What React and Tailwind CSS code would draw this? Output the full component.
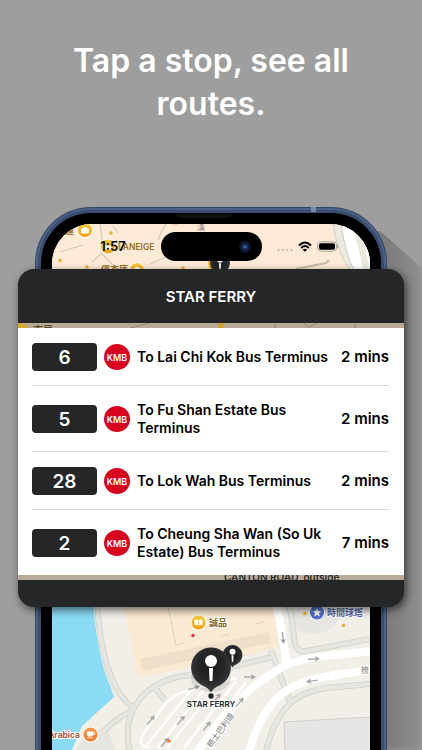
import React from "react";

const routes = [
  { number: "6", destination: "To Lai Chi Kok Bus Terminus", eta: "2 mins" },
  { number: "5", destination: "To Fu Shan Estate Bus Terminus", eta: "2 mins" },
  { number: "28", destination: "To Lok Wah Bus Terminus", eta: "2 mins" },
  { number: "2", destination: "To Cheung Sha Wan (So Uk Estate) Bus Terminus", eta: "7 mins" },
];

const arrows = [
  [151, 720, -50],
  [181, 720, -50],
  [207, 726, -50],
  [165, 742, -50],
  [217, 698, -50],
  [240, 702, -50],
  [194, 688, -16],
  [250, 677, 0],
  [314, 659, -2],
  [312, 681, 172],
  [283, 638, 84],
];

const cjk = "font-['Inter','Noto_Sans_CJK_TC',sans-serif]";

function Arrow({ x, y, angle }) {
  return (
    <g transform={`translate(${x} ${y}) rotate(${angle})`}>
      <path d="M-6 0H3" fill="none" stroke="#a9a9a9" strokeWidth="1.400" />
      <path d="M1 -2.800L6 0L1 2.800L2 0Z" fill="#a3a3a3" />
    </g>
  );
}

function Poi({ x, y, fill, children }) {
  return (
    <g transform={`translate(${x} ${y})`}>
      <circle r="8" fill="#fff" opacity=".75" />
      <circle r="7" fill={fill} />
      {children}
    </g>
  );
}

function StopPin({ x, y, scale }) {
  return (
    <g transform={`translate(${x} ${y}) scale(${scale})`}>
      <path
        d="M0 -20A20 20 0 0 1 9 17.8C5 19.5 2.500 21 0 25C-2.500 21 -5 19.500 -9 17.800A20 20 0 0 1 0 -20Z"
        fill="url(#pin)"
      />
      <circle cy="-6.500" r="6" fill="#fff" />
      <path d="M-2 .5H2L1.400 13.500H-1.400Z" fill="#fff" />
    </g>
  );
}

function Map() {
  return (
    <svg
      className={`h-full w-full ${cjk}`}
      viewBox="52 224 318 526"
      preserveAspectRatio="xMidYMin slice"
      role="img"
      aria-label="Map around the Star Ferry stop"
    >
      <defs>
        <radialGradient id="pin" cx=".5" cy=".4" r=".65">
          <stop offset="0" stopColor="#1c1d1f" />
          <stop offset=".5" stopColor="#242527" />
          <stop offset=".85" stopColor="#3a3b3d" />
          <stop offset="1" stopColor="#0c0c0c" />
        </radialGradient>
        <linearGradient id="gold" x1="0" y1="0" x2="0" y2="1">
          <stop offset="0" stopColor="#fbc93a" />
          <stop offset="1" stopColor="#eda312" />
        </linearGradient>
        <linearGradient id="orange" x1="0" y1="0" x2="0" y2="1">
          <stop offset="0" stopColor="#fa9a4a" />
          <stop offset="1" stopColor="#ee7420" />
        </linearGradient>
      </defs>
      <rect x="52" y="224" width="318" height="526" fill="#f1efe7" />

      {/* Upper district */}
      <rect x="52" y="224" width="318" height="110" fill="#fdebd7" />
      <path d="M333 224H370V272H352Q341 262 333 224Z" fill="#eceae0" />
      <path d="M341 222H352L364 272H354Q347 255 341 222Z" fill="#fff" />
      <path d="M359 222H370V272Q366 250 359 222Z" fill="#fff" />
      <path d="M333 224Q338 255 349 268L352 272M341 224Q345 254 355 272" fill="none" stroke="#cfcec4" strokeWidth="1" />
      <path d="M100 224Q103 240 102 253L92 262M113 226L118 233M116 240L121 247M102 254L117 269M150 264L166 257M166 224Q162 230 158 240M60 252L83 245M52 236L64 233" fill="none" stroke="#d5c8b7" strokeWidth="1.200" />
      <path d="M296 269L326 263L329 260" fill="none" stroke="#c8bba5" strokeWidth="2" />
      <g fill="#f5a623">
        <circle cx="111" cy="233" r="1.700" />
        <circle cx="60" cy="260.500" r="1.700" />
        <circle cx="87" cy="267" r="1.700" />
        <circle cx="183" cy="268" r="1.700" />
      </g>
      <circle cx="175" cy="222" r="4" fill="#f6c7bb" />
      <Poi x={85} y={230} fill="url(#gold)">
        <path d="M-3.500 -1H3.500V3H-3.500ZM-1.500 -1V-2.500H1.500V-1" fill="#fff" stroke="#fff" strokeWidth=".8" />
      </Poi>
      <text x="65" y="234" fontSize="9" fontWeight="600" fill="#93712c">運</text>
      <Poi x={108} y={246.5} fill="url(#gold)">
        <path d="M-3.500 -1H3.500V3H-3.500Z" fill="#fff" />
      </Poi>
      <text x="118" y="250" fontSize="8.500" fontWeight="600" fill="#93712c">LANEIGE</text>
      <text x="101" y="273" fontSize="9" fontWeight="600" fill="#93712c">優衣庫</text>
      <Poi x={137} y={270} fill="url(#gold)">
        <circle r="3" fill="#fff" />
      </Poi>
      <text x="197" y="230" fontSize="8" fill="#85817d">漢</text>
      <path d="M209 258L212 272" stroke="#f2b91f" strokeWidth="4" />
      <StopPin x={220} y={263} scale={0.5} />

      {/* Harbour and terminus */}
      <path d="M52 600H93C95 632 101 665 110 685L114 697L82 726L72 750H52Z" fill="#8adbf5" />
      <path d="M123 600H273L279 646L250 655L138 678Z" fill="#fbead3" />
      <path d="M140 659L269 632L271 643L143 671Z" fill="#eedfcb" />
      <path d="M168 607L176 645L185 643M221 636L230 634M256 624L264 622" fill="none" stroke="#ddd0bd" strokeWidth="1" />
      <circle cx="314" cy="606" r="28" fill="#e8e6e2" />
      <path d="M86 734L106 726L116 750H76Z" fill="#e7e5df" />
      <path d="M284 722L370 717V750H285Z" fill="#e7e6e5" />
      <path d="M285 750L284 722L370 717" fill="none" stroke="#cfceca" />

      <g fill="none" stroke="#d0d0c9" strokeWidth="6">
        <path d="M97 600C99 650 112 694 133 707" />
        <path d="M130 752C120 710 145 680 190 675L231 667L272 657" />
        <path d="M103 732Q117 717 134 710M155 688L165 700" />
        <path d="M289 600L295 644Q298 653 307 651L370 639" />
        <path d="M370 684L326 688Q292 693 279 718Q270 732 266 752" />
        <path d="M271 650L290 702" />
      </g>
      <g fill="none" stroke="#e6e6e1" strokeWidth="4.400">
        <path d="M97 600C99 650 112 694 133 707" />
        <path d="M130 752C120 710 145 680 190 675L231 667L272 657" />
        <path d="M103 732Q117 717 134 710M155 688L165 700" />
        <path d="M289 600L295 644Q298 653 307 651L370 639" />
        <path d="M370 684L326 688Q292 693 279 718Q270 732 266 752" />
        <path d="M271 650L290 702" />
      </g>
      <g fill="none" stroke="#fff" strokeWidth="2.400">
        <path d="M150 748Q138 747 142 737Q145 730 164 706Q173 694 187 691L236 678" />
        <path d="M145 747L185 698L192 690M157 748L204 690M167 748L213 692M184 748L236 681M196 748L246 682" />
      </g>
      <path d="M276 600L287 664" fill="none" stroke="#fff" strokeWidth="8" />
      <path d="M372 651C330 656 300 656 281 668S252 685 230 711L193 757" fill="none" stroke="#fff" strokeWidth="8" />
      <path d="M372 669C340 676 300 675 276 699Q256 722 249 754" fill="none" stroke="#fff" strokeWidth="8" />
      {arrows.map(([x, y, angle]) => (
        <Arrow key={`${x}-${y}`} x={x} y={y} angle={angle} />
      ))}

      <g stroke="#fff" strokeWidth="2" paintOrder="stroke" strokeLinejoin="round">
        <text transform="translate(211 748) rotate(-54)" fontSize="8" fill="#777">梳士巴利道</text>
        <text x="361" y="673" fontSize="8" fill="#777">梳</text>
        <text x="209" y="626" fontSize="9" fontWeight="600" fill="#856519">誠品</text>
        <text x="327" y="616" fontSize="9" fontWeight="600" fill="#5668ad">時間球塔</text>
        <text x="80" y="738" textAnchor="end" fontSize="8.500" fontWeight="600" fill="#a34c25">Arabica</text>
      </g>
      <Poi x={198.5} y={622.5} fill="url(#gold)">
        <path d="M0 -2Q-2 -3.500 -4 -2.500V2.500Q-2 2 0 3Q2 2 4 2.500V-2.500Q2 -3.500 0 -2Z" fill="#fff" />
        <path d="M0 -2V3" stroke="#f2ae1e" strokeWidth=".8" />
      </Poi>
      <Poi x={317} y={612.5} fill="#556fc9">
        <path d="M0 -4.500L1.300 -1.500L4.400 -1.300L2 .8L2.800 4L0 2.200L-2.800 4L-2 .8L-4.400 -1.300L-1.300 -1.500Z" fill="#fff" />
      </Poi>
      <Poi x={90.500} y={734.500} fill="url(#orange)">
        <path d="M-3.500 -3H2.500V0Q2.500 2 .5 2H-1.500Q-3.500 2 -3.500 0ZM-3.500 3H2.500V3.800H-3.500Z" fill="#fff" />
        <path d="M2.500 -2H4V0H2.500" fill="none" stroke="#fff" strokeWidth=".9" />
      </Poi>
      <circle cx="193" cy="635.500" r="1.700" fill="#e22d5c" />
      <circle cx="305" cy="613.500" r="1.700" fill="#f5a623" />
      <circle cx="343.500" cy="625.500" r="1.700" fill="#f5a623" />
      <circle cx="169" cy="741" r="1.700" fill="#f47a2b" />

      <ellipse cx="211" cy="679" rx="20" ry="13" fill="#000" opacity=".1" />
      <StopPin x={232.500} y={655} scale={0.5} />
      <StopPin x={211} y={667.500} scale={1} />
      <circle cx="211" cy="696" r="2.700" fill="#222" />
      <text x="211" y="707" textAnchor="middle" fontSize="8" fontWeight="600" fill="#222" stroke="#fff" strokeWidth="2" paintOrder="stroke" strokeLinejoin="round">STAR FERRY</text>
    </svg>
  );
}

function StatusBar() {
  return (
    <div className="absolute inset-x-0 top-2 grid h-[29px] grid-cols-3 items-center">
      <time className="pl-4 text-center text-[13px] leading-none font-semibold text-black">1:57</time>
      <div className="flex h-[29px] w-[101px] items-center justify-end justify-self-center rounded-full bg-black pr-[11px]">
        <span className="flex size-3 items-center justify-center rounded-full bg-[#0c1730]">
          <span className="flex size-1.5 items-center justify-center rounded-full bg-[#1b3a6c]">
            <span className="size-0.5 rounded-full bg-[#4f80bd]" />
          </span>
        </span>
      </div>
      <div className="flex items-center gap-[5px] pl-[13px]">
        <svg className="h-3 w-4" viewBox="0 0 16 12" aria-label="No signal">
          <g fill="#c9bfb1">
            <circle cx="1.500" cy="9" r="1.300" />
            <circle cx="5.800" cy="9" r="1.300" />
            <circle cx="10.100" cy="9" r="1.300" />
            <circle cx="14.400" cy="9" r="1.300" />
          </g>
        </svg>
        <svg className="h-3 w-[14px]" viewBox="0 0 14 12" aria-label="Wi-Fi">
          <path d="M1 4.500Q7 -1.500 13 4.500M3.200 7Q7 3.200 10.800 7" fill="none" stroke="#000" strokeWidth="1.900" />
          <path d="M4.800 8.600Q7 6.800 9.200 8.600L7 11Z" />
        </svg>
        <svg className="h-[11px] w-[22px]" viewBox="0 0 22 11" aria-label="Battery full">
          <rect x=".6" y=".9" width="18.800" height="9.200" rx="3" fill="#fdf3e4" stroke="#a59f94" />
          <rect x="2" y="2.200" width="16" height="6.600" rx="1.800" />
          <path d="M20.300 4V7Q21.500 6.500 21.500 5.500T20.300 4Z" fill="#a59f94" />
        </svg>
      </div>
    </div>
  );
}

function Phone() {
  return (
    <div className="relative mx-[35px] rounded-t-[56px] bg-[#344765] p-px pb-0">
      <div className="h-full rounded-t-[55px] border-2 border-b-0 border-[#4b6288] bg-[#3a4d6e] p-[3px] pb-0">
        <div className="h-full rounded-t-[50px] bg-black p-[11px] pb-0">
          <div className="relative h-full overflow-hidden rounded-t-[40px]">
            <Map />
            <StatusBar />
          </div>
        </div>
      </div>
      <span className="absolute top-0 right-[71px] h-[5px] w-[5px] bg-[#7c8bac]" />
      <span className="absolute top-[7px] left-[141px] h-1 w-14 rounded-b bg-[#0e0e0e]" />
    </div>
  );
}

function RouteRow({ route }) {
  return (
    <li className="flex items-center border-b border-[#dcdcdc] pt-[15px] pb-[14px] last:border-b-0">
      <span className="flex h-7 w-[65px] shrink-0 items-center justify-center rounded bg-[#252628] text-[19px] leading-none font-semibold text-white">
        {route.number}
      </span>
      <span className="ml-[7px] flex size-[26px] shrink-0 items-center justify-center rounded-full bg-[#d9001f] text-[9px] leading-none font-semibold text-white">
        KMB
      </span>
      <span className="ml-[7px] min-w-0 flex-1 text-[14px] leading-[18px] font-semibold text-black">{route.destination}</span>
      <span className="w-[54px] shrink-0 text-right text-[15px] leading-[18px] font-semibold whitespace-nowrap text-black">{route.eta}</span>
    </li>
  );
}

function StopCard() {
  return (
    <section className="relative mx-[18px] mt-[62px] self-start overflow-hidden rounded-[16px] bg-[#252628] shadow-[2px_3px_9px_rgba(0,0,0,0.6)]">
      <h2 className="flex h-[54px] items-center justify-center text-[15px] leading-none font-semibold text-white">STAR FERRY</h2>
      <svg className={`block h-[5px] w-full bg-[#b9aa97] ${cjk}`} viewBox="18 323 386 5" preserveAspectRatio="xMinYMin slice" aria-hidden="true">
        <circle cx="21" cy="330" r="7" fill="#d5a929" />
        <text x="33" y="334" fontSize="10" fontWeight="600" fill="#5b4b27">東昇</text>
        <path d="M130 328L150 323M275 323V328M355 323V328M303 323L309 327L317 323" fill="none" stroke="#97897a" />
        <path d="M221 323V328" stroke="#d3a11b" strokeWidth="5" />
      </svg>
      <ul className="bg-white pr-[15px] pl-[14px]">
        {routes.map((route) => (
          <RouteRow key={route.number} route={route} />
        ))}
      </ul>
      <svg className={`block h-[5px] w-full bg-[#b8ab99] ${cjk}`} viewBox="18 575 386 5" preserveAspectRatio="xMinYMin slice" aria-hidden="true">
        <text x="224" y="581" fontSize="10" fontWeight="600" fill="#292a2b">CANTON ROAD, outside</text>
      </svg>
      <div className="h-[27px]" />
    </section>
  );
}

export default function App() {
  return (
    <main className={`relative flex h-screen min-h-[640px] flex-col overflow-hidden bg-[#9e9e9e] ${cjk}`}>
      <h1 className="mx-auto max-w-[330px] pt-[39px] text-center text-[32px] leading-[43px] font-semibold text-white">
        Tap a stop, see all routes.
      </h1>
      <div className="relative mt-[82px] grid min-h-0 flex-1 grid-cols-1 grid-rows-1 *:col-start-1 *:row-start-1">
        <div className="w-[120px] justify-self-end bg-linear-to-r from-[#7c7c7c] from-70% to-[#8f8f8f] blur-[2px] [clip-path:polygon(0_40px,50px_24px,78px_24px,130px_70px,130px_100%,0_100%)]" />
        <Phone />
        <StopCard />
      </div>
    </main>
  );
}
